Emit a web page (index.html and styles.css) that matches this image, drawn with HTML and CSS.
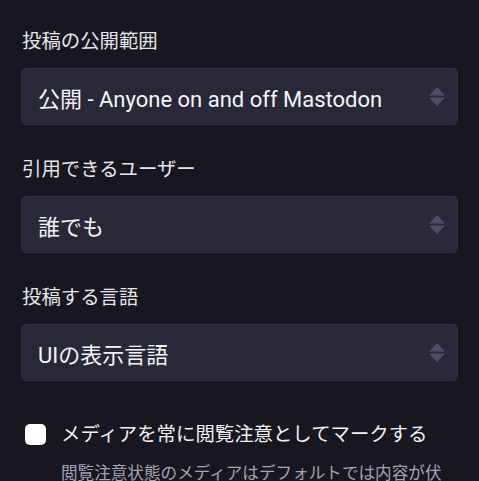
FILE: index.html
```html
<!DOCTYPE html>
<html lang="ja">
<head>
<meta charset="utf-8">
<link rel="stylesheet" href="styles.css">
</head>
<body>
<div class="form">
  <div class="field">
    <div class="label">投稿の公開範囲</div>
    <div class="select">
      <span class="value">公開 - Anyone on and off Mastodon</span>
      <svg class="arrows" width="16" height="20" viewBox="0 0 16 20"><path d="M8 0 L16 8.5 L0 8.5 Z M0 10.5 L16 10.5 L8 19 Z" fill="#4e4c68"/></svg>
    </div>
  </div>
  <div class="field">
    <div class="label">引用できるユーザー</div>
    <div class="select">
      <span class="value">誰でも</span>
      <svg class="arrows" width="16" height="20" viewBox="0 0 16 20"><path d="M8 0 L16 8.5 L0 8.5 Z M0 10.5 L16 10.5 L8 19 Z" fill="#4e4c68"/></svg>
    </div>
  </div>
  <div class="field">
    <div class="label">投稿する言語</div>
    <div class="select">
      <span class="value">UIの表示言語</span>
      <svg class="arrows" width="16" height="20" viewBox="0 0 16 20"><path d="M8 0 L16 8.5 L0 8.5 Z M0 10.5 L16 10.5 L8 19 Z" fill="#4e4c68"/></svg>
    </div>
  </div>
  <div class="check">
    <span class="box"></span>
    <div class="check-text">
      <div class="check-label">メディアを常に閲覧注意としてマークする</div>
      <div class="hint">閲覧注意状態のメディアはデフォルトでは内容が伏せられます</div>
    </div>
  </div>
</div>
</body>
</html>
```
FILE: styles.css
```css
html, body {
  margin: 0;
  padding: 0;
  background: #18171f;
  height: 481px;
  overflow: hidden;
}
body {
  font-family: Roboto, "Noto Sans CJK JP", sans-serif;
  color: #e6e5ee;
}
.form {
  padding: 28px 21px 0 21px;
  display: flex;
  flex-direction: column;
}
.field {
  display: flex;
  flex-direction: column;
  margin-bottom: 31px;
}
.label {
  font-size: 19.4px;
  line-height: 28px;
  margin-bottom: 12px;
  padding-left: 1px;
}
.select {
  height: 55px;
  border: 1px solid #33324a;
  border-radius: 5px;
  background: #292838;
  display: flex;
  align-items: center;
  justify-content: space-between;
  padding: 0 12px 0 16px;
  color: #f4f4f8;
}
.value {
  font-size: 22px;
}
.arrows {
  display: block;
}
.check {
  display: flex;
  align-items: flex-start;
  margin-top: 9px;
  padding-left: 4px;
}
.box {
  width: 21px;
  height: 21px;
  border-radius: 5px;
  background: #ffffff;
  margin-top: 3px;
  flex-shrink: 0;
}
.check-text {
  margin-left: 15px;
  flex: 1;
  min-width: 0;
}
.check-label {
  font-size: 19.4px;
  line-height: 28px;
  color: #f0eff6;
}
.hint {
  font-size: 16.6px;
  line-height: 24px;
  margin-top: 13px;
  color: #a3a2b5;
}
```
